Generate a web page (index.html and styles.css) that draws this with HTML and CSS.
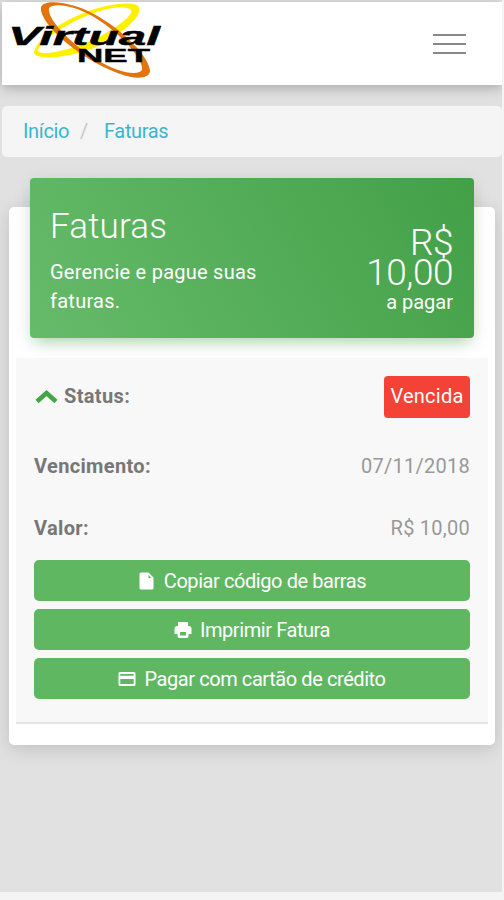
FILE: index.html
```html
<!doctype html>
<html lang="pt-BR">
  <head>
    <meta charset="utf-8" />
    <title>Faturas</title>
    <meta name="viewport" content="width=device-width" />
    <link rel="stylesheet" href="styles.css">
  </head>

  <body>
    <div class="page">
      <header class="navbar">
        <svg class="logo" width="162" height="83" viewBox="2 2 162 83">
          <g fill-rule="evenodd">
            <path fill="#fff000" d="M34 53C35 42 55 25 79 15C103 4 134 0 139 7C143 17 121 34 98 46C72 58 36 61 34 53ZM38 51C43 57 73 49 95 39C115 29 134 15 131 10C125 4 103 9 84 17C61 27 38 43 38 51Z" />
            <path fill="#e2740e" d="M41 7C44 -1 70 1 94 14C125 31 151 59 150 72C146 83 121 77 96 63C62 44 39 19 41 7ZM49 8C47 19 70 43 97 60C119 73 138 76 142 70C144 60 122 34 94 17C72 4 53 3 49 8Z" />
          </g>
          <text class="logo-name" x="8" y="45" textLength="152" lengthAdjust="spacingAndGlyphs">Virtual</text>
          <text class="logo-net" x="77" y="62" textLength="73" lengthAdjust="spacingAndGlyphs">NET</text>
        </svg>
        <div class="toggler">
          <span></span>
          <span></span>
          <span></span>
        </div>
      </header>

      <nav class="breadcrumb">
        <a href="#">Início</a>
        <span class="separator">/</span>
        <a href="#">Faturas</a>
      </nav>

      <section class="card">
        <div class="card-header">
          <div>
            <h4>Faturas</h4>
            <p>Gerencie e pague suas<br>faturas.</p>
          </div>
          <div class="total">
            <div class="amount">R$<br>10,00</div>
            <div class="label">a pagar</div>
          </div>
        </div>

        <div class="invoice">
          <div class="row status">
            <b>
              <svg class="chevron" width="24" height="16" viewBox="0 0 24 16">
                <path d="M3 13.500L12.500 5l9.500 8.500" fill="none" stroke="#43a548" stroke-width="4.500" />
              </svg>
              <span class="status-label">Status:</span>
            </b>
            <span class="badge">Vencida</span>
          </div>
          <div class="row due">
            <b>Vencimento:</b>
            <span>07/11/2018</span>
          </div>
          <div class="row value">
            <b>Valor:</b>
            <span>R$ 10,00</span>
          </div>
          <div class="actions">
            <a href="#" class="btn">
              <svg width="18" height="18" viewBox="0 0 18 18">
                <path fill="#fff" fill-rule="evenodd" d="M3 0.500h7.500l5 5V16a1.500 1.500 0 0 1-1.500 1.500H3A1.500 1.500 0 0 1 1.500 16V2A1.500 1.500 0 0 1 3 .5zM10.500 3v3h3z" />
              </svg>
              <span>Copiar código de barras</span>
            </a>
            <a href="#" class="btn">
              <svg width="18" height="18" viewBox="0 0 18 18">
                <path fill="#fff" fill-rule="evenodd" d="M4 1h10v4h.5a3 3 0 0 1 3 3v5H14.500v2a2 2 0 0 1-2 2h-7a2 2 0 0 1-2-2v-2H.5V8a3 3 0 0 1 3-3H4zM6 11v3.500h6V11z" />
              </svg>
              <span>Imprimir Fatura</span>
            </a>
            <a href="#" class="btn">
              <svg width="18" height="18" viewBox="0 0 18 18">
                <path fill="#fff" fill-rule="evenodd" d="M2 2h14a1.500 1.500 0 0 1 1.500 1.500v11A1.500 1.500 0 0 1 16 16H2A1.500 1.500 0 0 1 .5 14.500v-11A1.500 1.500 0 0 1 2 2zM2.300 4v1.700h13.400V4zM2.300 9v5h13.400V9z" />
              </svg>
              <span>Pagar com cartão de crédito</span>
            </a>
          </div>
        </div>
      </section>
    </div>
  </body>
</html>
```

FILE: styles.css
```css
* {
  box-sizing: border-box;
}
body {
  margin: 0;
  background: #f4f4f4;
  color: #777;
  font: 400 20px/30px Roboto, sans-serif;
}
a {
  color: #35b8cf;
  text-decoration: none;
}
.page {
  width: 502px;
  height: 892px;
  padding: 2px 0 0 2px;
  overflow: hidden;
  background: #e1e1e1;
}
.navbar {
  display: flex;
  justify-content: space-between;
  height: 83px;
  padding-right: 36px;
  background: #fff;
  box-shadow: 0 3px 12px rgba(0, 0, 0, 0.26);
}
.logo text {
  stroke: #000;
  stroke-width: 0.4px;
}
.logo-name {
  font: italic bold 25px "Liberation Sans", sans-serif;
}
.logo-net {
  font: bold 19px "Liberation Sans", sans-serif;
}
.toggler {
  display: flex;
  flex-direction: column;
  gap: 7px;
  width: 33px;
  padding-top: 32px;
}
.toggler span {
  height: 2px;
  background: #888;
}
.breadcrumb {
  display: flex;
  height: 51px;
  margin-top: 21px;
  padding: 10px 21px;
  border-radius: 5px;
  background: #f5f5f5;
  letter-spacing: -0.35px;
}
.separator {
  margin: 0 16px 0 11px;
  color: #c8c8c8;
}
.card {
  display: flow-root;
  width: 486px;
  height: 538px;
  margin: 50px 0 0 7px;
  padding: 0 7px;
  border-radius: 5px;
  background: #fff;
  box-shadow: 0 4px 18px rgba(0, 0, 0, 0.15);
}
/* sticks out of the top of the card */
.card-header {
  display: flex;
  justify-content: space-between;
  width: 444px;
  height: 160px;
  margin: -29px 14px 20px;
  padding: 28px 21px 0 20px;
  border-radius: 4px;
  background: linear-gradient(60deg, #66bb6a, #43a047);
  box-shadow: 0 4px 20px rgba(0, 0, 0, 0.08), 0 8px 14px -5px rgba(76, 175, 80, 0.4);
  color: #fff;
}
.card-header h4 {
  margin: 0;
  padding-top: 1px;
  font-size: 35px;
  font-weight: 300;
  letter-spacing: 0.15px;
  line-height: 40px;
}
.card-header p {
  margin: 11px 0 0;
  letter-spacing: 0.25px;
  line-height: 29px;
}
.total {
  padding-top: 22px;
  text-align: right;
}
.amount {
  font-size: 37px;
  font-weight: 300;
  letter-spacing: -0.5px;
  line-height: 29.500px;
}
.total .label {
  line-height: 30px;
}
.invoice {
  height: 366px;
  padding: 18px 18px 0;
  border-bottom: 2px solid #e5e5e5;
  background: #f8f8f8;
}
.row {
  display: flex;
  justify-content: space-between;
}
.row b {
  display: flex;
  letter-spacing: 0.35px;
}
.row > span {
  color: #999;
  letter-spacing: 0.25px;
}
.status {
  height: 75px;
}
.status b {
  gap: 6px;
  padding-top: 5px;
}
.chevron {
  margin-top: 7px;
}
.row .badge {
  width: 86px;
  height: 42px;
  border-radius: 4px;
  background: #f44336;
  color: #fff;
  line-height: 41px;
  text-align: center;
}
.due {
  height: 62px;
}
.value {
  height: 47px;
}
.actions {
  display: flex;
  flex-direction: column;
  gap: 8px;
}
.btn {
  display: flex;
  justify-content: center;
  align-items: center;
  gap: 8px;
  height: 41px;
  border-radius: 5px;
  background: #60b762;
  color: #fff;
  letter-spacing: -0.42px;
}
```
